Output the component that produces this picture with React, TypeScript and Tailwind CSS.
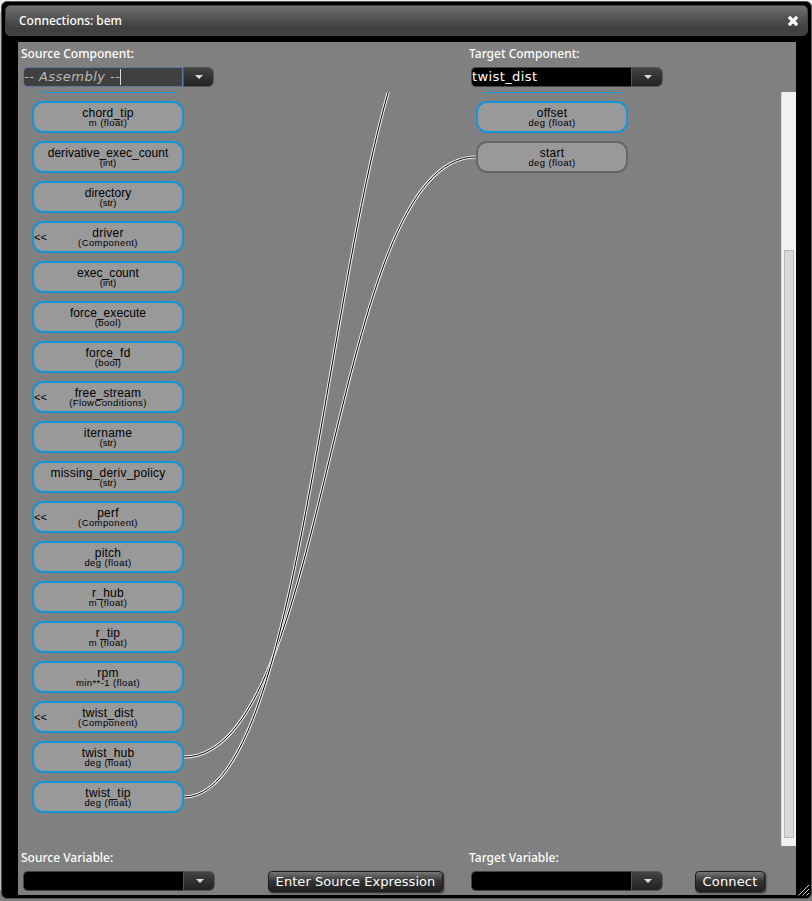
import React from "react";

type Item = { name: string; type: string; open?: boolean; idle?: boolean; tight?: boolean };

const sources: Item[] = [
  { name: "chord_tip", type: "m (float)" },
  { name: "derivative_exec_count", type: "(int)", tight: true },
  { name: "directory", type: "(str)", tight: true },
  { name: "driver", type: "(Component)", open: true },
  { name: "exec_count", type: "(int)", tight: true },
  { name: "force_execute", type: "(bool)", tight: true },
  { name: "force_fd", type: "(bool)" },
  { name: "free_stream", type: "(FlowConditions)", open: true },
  { name: "itername", type: "(str)" },
  { name: "missing_deriv_policy", type: "(str)" },
  { name: "perf", type: "(Component)", open: true },
  { name: "pitch", type: "deg (float)" },
  { name: "r_hub", type: "m (float)" },
  { name: "r_tip", type: "m (float)" },
  { name: "rpm", type: "min**-1 (float)" },
  { name: "twist_dist", type: "(Component)", open: true },
  { name: "twist_hub", type: "deg (float)" },
  { name: "twist_tip", type: "deg (float)" },
];

const targets: Item[] = [
  { name: "offset", type: "deg (float)" },
  { name: "start", type: "deg (float)", idle: true },
];

function Node({ item }: { item: Item }) {
  const short = item.type.length < 6;
  return (
    <div
      className={
        "relative h-8 w-[152px] shrink-0 rounded-[11px] border-2 bg-[#999999] text-center text-black " +
        (item.idle ? "border-[#666666]" : "border-[#1395dc]")
      }
    >
      {item.open && (
        <span className="absolute left-0 top-[8px] text-[11px] leading-[13px]">&lt;&lt;</span>
      )}
      <div
        className={
          "mt-[4px] h-[12px] text-[12px] leading-[12px] " + (item.tight ? "tracking-[0.06px]" : "tracking-[0.22px]")
        }
      >
        {item.name}
      </div>
      <div
        className={
          "-mt-px text-[9.5px] leading-[10px] " + (short ? "tracking-normal" : "tracking-[0.4px]")
        }
      >
        {item.type}
      </div>
    </div>
  );
}

function Column({ items }: { items: Item[] }) {
  return (
    <div className="flex w-[152px] flex-col items-center gap-2">
      <div className="-mb-px h-[2px] w-[138px] bg-[linear-gradient(#1395dc_50%,transparent_50%)]" />
      {items.map((i) => (
        <Node key={i.name} item={i} />
      ))}
    </div>
  );
}

function Combo({ value, active }: { value?: string; active?: boolean }) {
  return (
    <div className={"flex h-5 " + (active ? "w-[191px]" : "w-[192px]")}>
      <div
        className={
          "flex w-[160px] shrink-0 items-center overflow-hidden rounded-l-[5px] border font-['DejaVu_Sans',sans-serif] text-[13px] leading-[18px] " +
          (active
            ? "border-[#5b77a8] bg-[#404040] italic tracking-[0.48px] text-[#b8b8b8]"
            : "border-[#444444] border-r-black bg-black tracking-[0.4px] text-white")
        }
      >
        <span className="whitespace-pre">{value}</span>
        {active && <span className="h-4 w-px shrink-0 bg-[#dddddd]" />}
      </div>
      <div className="flex flex-1 items-center justify-center rounded-r-[6px] border border-[#555555] bg-gradient-to-b from-[#444444] to-[#222222] pl-px">
        <svg width="8" height="4" viewBox="0 0 8 4">
          <path d="M0 0H8L4 4Z" fill="#dddddd" />
        </svg>
      </div>
    </div>
  );
}

function Label({ children }: { children: React.ReactNode }) {
  return (
    <div className="h-[16px] whitespace-nowrap font-['Noto_Sans',sans-serif] text-[12px] font-medium leading-4 text-white">
      {children}
    </div>
  );
}

function Button({ children, className }: { children: React.ReactNode; className: string }) {
  return (
    <button
      className={
        "h-[21px] whitespace-nowrap rounded-[4px] border border-[#1c1c1c] bg-gradient-to-b from-[#777777] via-[#333333] via-50% to-[#222222] text-center font-['DejaVu_Sans',sans-serif] text-[13px] leading-[19px] text-white shadow-[1px_1px_2px_#222] " +
        className
      }
    >
      {children}
    </button>
  );
}

function Wire({ d }: { d: string }) {
  return (
    <g fill="none">
      <path d={d} stroke="#f4f4f4" strokeWidth="3" />
      <path d={d} stroke="#000000" strokeWidth="1" />
    </g>
  );
}

export default function App() {
  return (
    <div className="h-[901px] w-[812px] overflow-hidden bg-[linear-gradient(#eeeeee_0_12px,#bbbbbb_12px_890px,#808080_890px)] pl-px pt-px font-['Liberation_Sans',Arial,sans-serif]">
      <div className="relative flex h-[898px] w-[811px] flex-col rounded-[6px] border border-[#555555] bg-black px-[3px] pt-[3px]">
        <div className="flex h-[31px] shrink-0 items-center justify-between rounded-[5px] border border-[#444444] bg-gradient-to-b from-[#707070] to-[#404040] to-75% pl-[13px] pr-[9px]">
          <span className="font-['Noto_Sans',sans-serif] text-[12px] font-medium leading-4 tracking-[-0.03px] text-white">
            Connections: bem
          </span>
          <svg width="10" height="10" viewBox="0 0 10 10">
            <path d="M2 2L8 8M8 2L2 8" stroke="#ffffff" strokeWidth="3.2" strokeLinecap="square" />
          </svg>
        </div>

        <div className="ml-[13px] mt-[6px] flex h-[853px] w-[778px] flex-col bg-[#808080]">
          <div className="flex h-[50px] shrink-0 pl-[3px] pt-[4px]">
            <div className="w-[448px]">
              <Label>Source Component:</Label>
              <div className="ml-[2px] mt-[5px]">
                <Combo value="-- Assembly --" active />
              </div>
            </div>
            <div>
              <Label>Target Component:</Label>
              <div className="ml-[2px] mt-[5px]">
                <Combo value="twist_dist" />
              </div>
            </div>
          </div>

          <div className="relative flex h-[754px] shrink-0 overflow-hidden">
            <div className="flex flex-1 gap-[292px] pl-[14px]">
              <Column items={sources} />
              <Column items={targets} />
            </div>
            <div className="w-[15px] border-l border-[#d8d8d8] bg-[#f1f1f1] pl-[2px] pt-[158px]">
              <div className="h-[588px] w-[10px] border border-[#b8b8b8] bg-[#d9d9d9]" />
            </div>
            <svg
              className="pointer-events-none absolute left-0 top-0"
              width="763"
              height="754"
              viewBox="18 92 763 754"
            >
              <Wire d="M184 757C330 757 330 157 476 157" />
              <Wire d="M184 797C330 797 330 -43 476 -43" />
            </svg>
          </div>

          <div className="flex flex-1 pl-[3px] pt-[4px]">
            <div className="w-[247px]">
              <Label>Source Variable:</Label>
              <div className="ml-[2px] mt-[5px]">
                <Combo />
              </div>
            </div>
            <div className="w-[201px] pt-[21px]">
              <Button className="block w-[175px] tracking-[0.06px]">Enter Source Expression</Button>
            </div>
            <div className="w-[226px]">
              <Label>Target Variable:</Label>
              <div className="ml-[2px] mt-[5px]">
                <Combo />
              </div>
            </div>
            <div className="pt-[21px]">
              <Button className="block w-[70px] tracking-[0.15px]">Connect</Button>
            </div>
          </div>
        </div>
        <svg className="absolute bottom-[2px] right-[1px]" width="12" height="12" viewBox="0 0 12 12">
          <path d="M0.5 11.5L11 1M4.5 11.5L11 5M8.5 11.5L11 9" stroke="#cccccc" strokeWidth="1" />
        </svg>
      </div>
    </div>
  );
}
